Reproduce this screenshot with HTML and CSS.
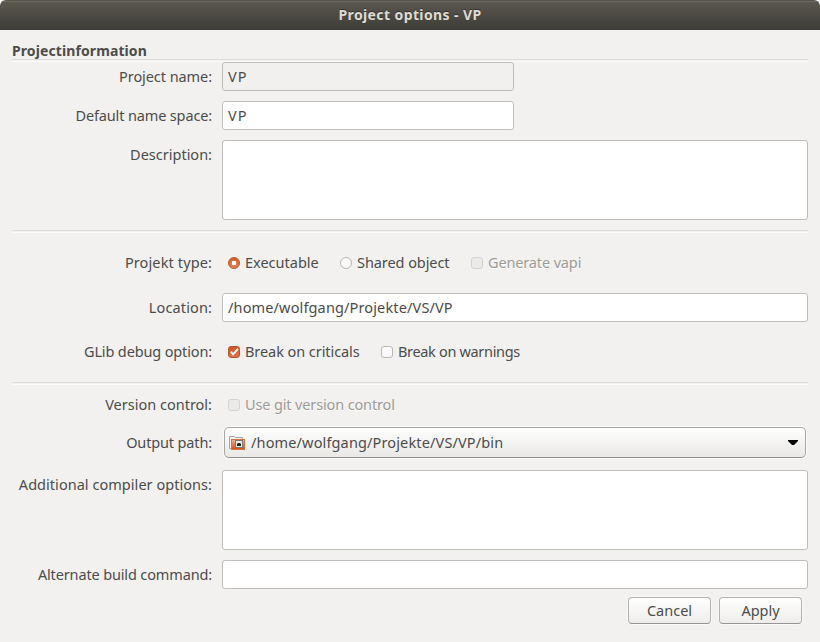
FILE: index.html
```html
<!DOCTYPE html>
<html lang="en">
<head>
<meta charset="utf-8">
<title>Project options - VP</title>
<link rel="stylesheet" href="styles.css">
</head>
<body>
<div class="window">
  <header class="titlebar">Project options - VP</header>
  <main class="content">
    <h1 class="heading">Projectinformation</h1>
    <div class="separator"></div>
    <section class="form">
      <div class="label snug">Project name:</div>
      <div class="entry short readonly">VP</div>
      <div class="label tight">Default name space:</div>
      <div class="entry short">VP</div>
      <div class="label">Description:</div>
      <div class="entry area"></div>
    </section>
    <div class="separator spaced"></div>
    <section class="form middle">
      <div class="label wide">Projekt type:</div>
      <div class="options">
        <div class="option executable"><span class="radio on"></span><span class="text">Executable</span></div>
        <div class="option shared"><span class="radio"></span><span class="text snug">Shared object</span></div>
        <div class="option vapi disabled"><span class="check"></span><span class="text tight">Generate vapi</span></div>
      </div>
      <div class="label wide">Location:</div>
      <div class="entry path">/home/wolfgang/Projekte/VS/VP</div>
      <div class="label tight">GLib debug option:</div>
      <div class="options">
        <div class="option criticals"><span class="check on"><svg viewBox="0 0 13 13" width="12" height="12"><path d="M3 6.2 5.5 9 10.8 3" fill="none" stroke="#fff" stroke-width="2"/></svg></span><span class="text snug">Break on criticals</span></div>
        <div class="option warnings"><span class="check"></span><span class="text">Break on warnings</span></div>
      </div>
    </section>
    <div class="separator"></div>
    <section class="form bottom">
      <div class="label">Version control:</div>
      <div class="options">
        <div class="option git disabled"><span class="check"></span><span class="text tight">Use git version control</span></div>
      </div>
      <div class="label output tight">Output path:</div>
      <div class="chooser">
        <svg class="folder" viewBox="0 0 16 16" width="16" height="16">
          <defs><linearGradient id="folder-fill" x2="0" y2="1"><stop offset="0" stop-color="#f0b48c"/><stop offset="1" stop-color="#d84a16"/></linearGradient></defs>
          <path d="M.5 13.5v-12h5l1 1h7v11z" fill="#f4f2f0" stroke="#aaa5a0"/>
          <rect x="2.5" y="4.5" width="13" height="10" fill="url(#folder-fill)" stroke="#d9703f"/>
          <rect x="6.5" y="5.5" width="7" height="7" fill="#eee" stroke="#777"/>
          <path d="M8 9l1-1h2l1 1v2H8z" fill="#222"/>
        </svg>
        <span class="path">/home/wolfgang/Projekte/VS/VP/bin</span>
        <svg class="arrow" viewBox="0 0 10 6" width="10" height="6"><path d="M0 0h10v1L6 5H4L0 1z" fill="#000"/></svg>
      </div>
      <div class="label additional">Additional compiler options:</div>
      <div class="entry area"></div>
      <div class="label tight">Alternate build command:</div>
      <div class="entry"></div>
    </section>
    <footer class="actions"><button class="button">Cancel</button><button class="button">Apply</button></footer>
  </main>
</div>
</body>
</html>
```
FILE: styles.css
```css
* { box-sizing: border-box; }
body { margin: 0; background: #fff; color: #4c4c4c; font: 14.5px/20px "Noto Sans", sans-serif; }
.window { height: 642px; background: #f2f1ef; border-radius: 6px 6px 0 0; overflow: hidden; }
.titlebar { height: 30px; line-height: 27px; text-align: center; font-weight: 700; font-size: 14px; letter-spacing: .4px; color: #dfdbd2; background: linear-gradient(#5b584f, #3d3c37); border-top: 1px solid #55534b; box-shadow: inset 0 1px #6b685f; text-shadow: 0 -1px #33322e; }
.content { padding: 10px 12px 0; }
.heading { margin: 0; height: 19px; font-size: 14px; line-height: 21px; letter-spacing: .1px; }
.separator { height: 3px; border-top: 1px solid #dcdcda; border-bottom: 1px solid #fbfbfa; }
.form { display: grid; grid-template-columns: 200px 586px; column-gap: 10px; row-gap: 10px; }
.label { text-align: right; white-space: nowrap; height: 29px; line-height: 29px; }
.snug { letter-spacing: -.07px; }
.tight { letter-spacing: -.14px; }
.wide { letter-spacing: .12px; }
.additional { letter-spacing: .04px; }
.entry { height: 29px; line-height: 27px; padding: 0 5px; border: 1px solid #bfbdb9; border-radius: 3px; background: #fff; white-space: nowrap; }
.short { width: 292px; letter-spacing: 1px; }
.path { letter-spacing: .14px; }
.readonly { background: #f1f0ee; }
.area { height: 80px; }
.spaced { margin-top: 10px; }
.middle { padding: 15px 0 16px; row-gap: 0; grid-template-rows: 45px 44px 29px; }
.middle .entry { margin-top: 0; }
.options { display: flex; height: 29px; align-items: center; padding-left: 6px; }
.option { display: flex; align-items: center; gap: 5px; white-space: nowrap; }
.option .text { margin-top: -2px; }
.radio, .check { width: 12px; height: 12px; flex: none; border: 1px solid #b9b7b4; border-radius: 3px; background: linear-gradient(#fff, #f7f6f5); }
.radio { border-radius: 50%; }
.radio.on { background: radial-gradient(circle, #fff 0 2px, transparent 2.6px), linear-gradient(#d45e31, #e58258); border-color: #b9532c; }
.check.on { background: linear-gradient(#cf5526, #e27248); border-color: #b9532c; }
.check svg { display: block; margin: -1px; }
.executable { width: 112px; }
.shared { width: 131px; }
.criticals { width: 153px; }
.warnings .text { letter-spacing: -.33px; }
.disabled { color: #9c9a97; text-shadow: 0 1px #fff; }
.disabled .check { background: #ebeae8; border-color: #d5d3d0; }
.bottom { padding-top: 5px; row-gap: 0; grid-template-rows: 36px 44px 90px 29px; }
.output { margin-top: 2px; }
.chooser { margin: 1px 2px 0; height: 31px; display: flex; align-items: center; padding: 0 7px 0 4px; border: 1px solid #aaa8a5; border-bottom-color: #8f8e8c; border-radius: 5px; background: linear-gradient(#fff, #e9e8e6); box-shadow: 0 0 0 1px #fafafa; white-space: nowrap; }
.chooser .path { margin: -2px 0 0 6px; flex: 1; }
.actions { display: flex; justify-content: flex-end; gap: 8px; padding: 8px 6px 0; }
.button { width: 83px; height: 27px; padding: 0 0 2px; font: inherit; color: inherit; border: 1px solid #b3b1ae; border-bottom-color: #969492; border-radius: 4px; background: linear-gradient(#fff, #eeedeb); box-shadow: 0 0 0 1px #f8f8f7; }
```
